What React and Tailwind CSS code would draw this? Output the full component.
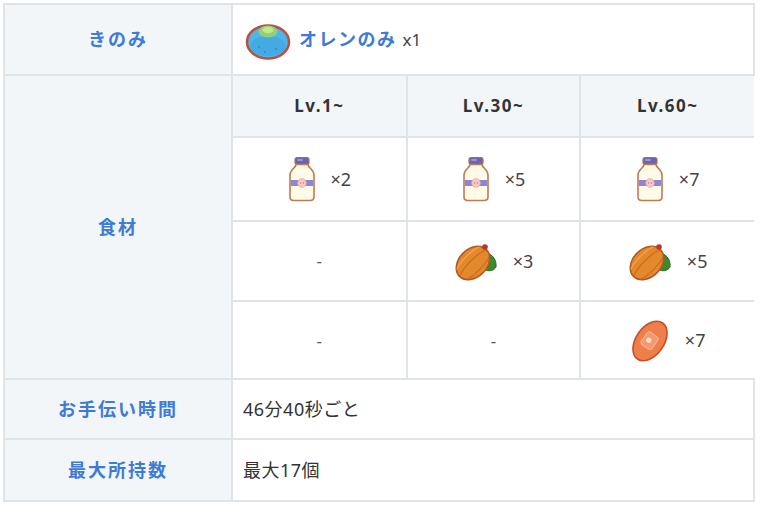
import React from 'react'

const jp = { fontFamily: '"Noto Sans", "Noto Sans CJK JP", sans-serif' }

function Berry() {
  return (
    <svg width="46" height="40" viewBox="0 0 46 40">
      <ellipse cx="23" cy="22" rx="21" ry="16.5" fill="#4fb4ec" stroke="#b8503a" strokeWidth="2.5" />
      <ellipse cx="23" cy="26" rx="18" ry="10" fill="#3fa3e0" opacity="0.6" />
      <ellipse cx="23" cy="11.5" rx="9.5" ry="6" fill="#8fd07a" />
      <ellipse cx="23" cy="10" rx="5.5" ry="3.2" fill="#c7e88a" />
      <circle cx="14" cy="27" r="0.9" fill="#2d85c5" />
      <circle cx="31" cy="29" r="0.9" fill="#2d85c5" />
      <circle cx="20" cy="32" r="0.9" fill="#2d85c5" />
    </svg>
  )
}

function Milk() {
  return (
    <svg width="28" height="46" viewBox="0 0 28 46">
      <rect x="7" y="1.5" width="14" height="7" rx="2" fill="#6b63b5" stroke="#b0704a" strokeWidth="1.2" />
      <rect x="9" y="3" width="6" height="2" rx="1" fill="#9a94d8" />
      <path d="M8 8.5 C8 12 2 13 2 19 L2 41 C2 43.5 3.5 44.5 6 44.5 L22 44.5 C24.5 44.5 26 43.5 26 41 L26 19 C26 13 20 12 20 8.5 Z" fill="#fffbe8" stroke="#c07a4f" strokeWidth="1.6" />
      <rect x="2.8" y="24" width="22.4" height="6" fill="#8d86d6" />
      <circle cx="14" cy="27" r="4.3" fill="#f7c9c5" stroke="#e4a6a0" strokeWidth="0.8" />
      <circle cx="12.6" cy="27" r="0.7" fill="#c77" />
      <circle cx="15.4" cy="27" r="0.7" fill="#c77" />
    </svg>
  )
}

function Cacao() {
  return (
    <svg width="44" height="40" viewBox="0 0 44 40">
      <path d="M29 12 C37 11 43 18 42 26 C40 30 34 31 30 28 Z" fill="#3d8a2e" stroke="#2c6a22" strokeWidth="1" />
      <g transform="rotate(-45 19 22)">
        <ellipse cx="19" cy="22" rx="19" ry="14" fill="#e3892c" stroke="#b3581e" strokeWidth="1.6" />
        <path d="M1 22 C8 18 30 18 37 22" fill="none" stroke="#c26a22" strokeWidth="1.1" />
        <path d="M3 15 C10 12 28 12 35 15" fill="none" stroke="#f2ab55" strokeWidth="1" />
        <path d="M3 29 C10 32 28 32 35 29" fill="none" stroke="#c26a22" strokeWidth="1" />
      </g>
      <circle cx="31" cy="6" r="2.8" fill="#b8362a" />
    </svg>
  )
}

function Sausage() {
  return (
    <svg width="40" height="44" viewBox="0 0 40 44">
      <g transform="rotate(-55 20 22)">
        <ellipse cx="20" cy="22" rx="22" ry="14" fill="#ee7e4a" stroke="#c4502a" strokeWidth="1.6" />
        <rect x="12.5" y="15" width="15" height="13" rx="3" fill="#f59a6c" stroke="#fbb796" strokeWidth="1" />
        <circle cx="20" cy="20.5" r="2.6" fill="#fde0cf" />
      </g>
    </svg>
  )
}

function Item({ icon, count }) {
  return (
    <div className="flex items-center justify-center gap-[15px]">
      {icon}
      <span className="text-[18px] text-[#444]">×{count}</span>
    </div>
  )
}

function Dash() {
  return <div className="flex items-center justify-center text-[17px] text-[#555]">-</div>
}

const th = 'bg-[#f3f6f9] border-2 border-[#dfe4ea] text-[#3e7ad6] font-bold text-[18px] tracking-[2px] text-center align-middle'
const cell = 'border-2 border-[#dfe4ea] bg-white align-middle'
const lv = 'bg-[#f3f6f9] border-2 border-t-0 border-[#dfe4ea] text-[#333] font-bold text-[17px] tracking-[1.5px]'

export default function App() {
  return (
    <div className="bg-white w-[760px] h-[506px] pl-[3px] pt-[3px]" style={jp}>
      <table className="border-collapse w-[752px] table-fixed">
        <colgroup>
          <col className="w-[228px]" />
          <col />
        </colgroup>
        <tbody>
          <tr className="h-[71px]">
            <th className={th}>きのみ</th>
            <td className={cell + ' pl-[12px]'}>
              <div className="flex items-center gap-[8px]">
                <Berry />
                <span className="text-[#3e7ad6] font-bold text-[18px] tracking-[1.5px]">オレンのみ</span>
                <span className="text-[17px] text-[#444] -ml-[2px]">x1</span>
              </div>
            </td>
          </tr>
          <tr>
            <th className={th}>食材</th>
            <td className="p-0 align-top">
              <table className="border-collapse w-full table-fixed -my-[1px]">
                <tbody>
                  <tr className="h-[62px]">
                    <th className={lv + ' border-l-0'}>Lv.1~</th>
                    <th className={lv}>Lv.30~</th>
                    <th className={lv + ' border-r-0'}>Lv.60~</th>
                  </tr>
                  <tr className="h-[84px]">
                    <td className="border-2 border-l-0 border-[#dfe4ea]"><Item icon={<Milk />} count="2" /></td>
                    <td className="border-2 border-[#dfe4ea]"><Item icon={<Milk />} count="5" /></td>
                    <td className="border-2 border-r-0 border-[#dfe4ea]"><Item icon={<Milk />} count="7" /></td>
                  </tr>
                  <tr className="h-[80px]">
                    <td className="border-2 border-l-0 border-[#dfe4ea]"><Dash /></td>
                    <td className="border-2 border-[#dfe4ea]"><Item icon={<Cacao />} count="3" /></td>
                    <td className="border-2 border-r-0 border-[#dfe4ea]"><Item icon={<Cacao />} count="5" /></td>
                  </tr>
                  <tr className="h-[78px]">
                    <td className="border-2 border-l-0 border-b-0 border-[#dfe4ea]"><Dash /></td>
                    <td className="border-2 border-b-0 border-[#dfe4ea]"><Dash /></td>
                    <td className="border-2 border-r-0 border-b-0 border-[#dfe4ea]"><Item icon={<Sausage />} count="7" /></td>
                  </tr>
                </tbody>
              </table>
            </td>
          </tr>
          <tr className="h-[60px]">
            <th className={th}>お手伝い時間</th>
            <td className={cell + ' pl-[10px] text-[18px] tracking-[0.5px] text-[#333]'}>46分40秒ごと</td>
          </tr>
          <tr className="h-[62px]">
            <th className={th}>最大所持数</th>
            <td className={cell + ' pl-[10px] text-[18px] tracking-[0.5px] text-[#333]'}>最大17個</td>
          </tr>
        </tbody>
      </table>
    </div>
  )
}
